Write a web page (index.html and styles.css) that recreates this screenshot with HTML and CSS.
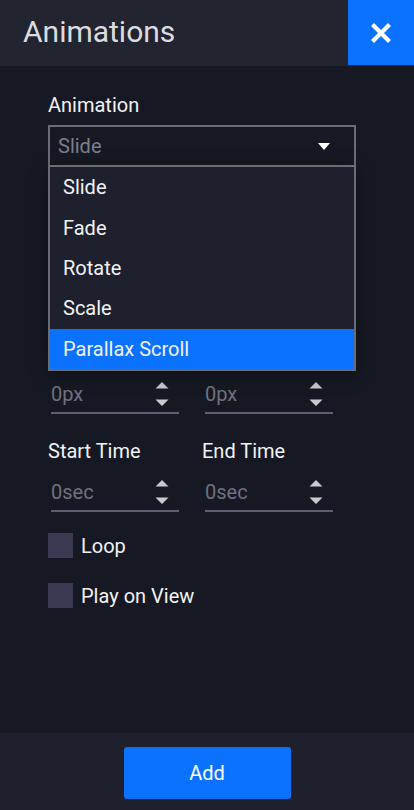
FILE: index.html
```html
<!DOCTYPE html>
<html lang="en">
<head>
<meta charset="utf-8">
<title>Animations</title>
<link rel="stylesheet" href="styles.css">
</head>
<body>
<div class="app">
  <header class="topbar">
    <h1 class="title">Animations</h1>
    <button class="close" aria-label="Close">
      <svg width="20" height="20" viewBox="0 0 20 20"><path d="M3 3 L17 17 M17 3 L3 17" stroke="#fff" stroke-width="4.2" stroke-linecap="square" fill="none"/></svg>
    </button>
  </header>

  <main class="content">
    <div class="field">
      <div class="label">Animation</div>
      <div class="select-wrap">
        <div class="select">
          <span class="placeholder">Slide</span>
          <svg class="caret" width="12" height="7" viewBox="0 0 12 7"><path d="M0 0 H12 L6 7 Z" fill="#fff"/></svg>
        </div>
        <ul class="menu">
          <li class="item">Slide</li>
          <li class="item">Fade</li>
          <li class="item">Rotate</li>
          <li class="item">Scale</li>
          <li class="item active">Parallax Scroll</li>
        </ul>
      </div>
    </div>

    <div class="field hidden-field">
      <div class="label">Direction</div>
      <div class="select"><span class="placeholder">Left</span></div>
    </div>

    <div class="check hidden-check">
      <span class="box"></span><span class="check-label">Reverse</span>
    </div>

    <div class="grid2 first-row">
      <div class="col">
        <div class="label under">Offset X</div>
        <div class="num"><span class="num-val">0px</span>
          <svg class="spin" width="14" height="26" viewBox="0 0 14 26"><path d="M7 1 L13.5 7.5 H0.5 Z M0.5 18.5 H13.5 L7 25 Z" fill="#c9cad0"/></svg>
        </div>
      </div>
      <div class="col">
        <div class="label under">Offset Y</div>
        <div class="num"><span class="num-val">0px</span>
          <svg class="spin" width="14" height="26" viewBox="0 0 14 26"><path d="M7 1 L13.5 7.5 H0.5 Z M0.5 18.5 H13.5 L7 25 Z" fill="#c9cad0"/></svg>
        </div>
      </div>
    </div>

    <div class="grid2">
      <div class="col">
        <div class="label">Start Time</div>
        <div class="num"><span class="num-val">0sec</span>
          <svg class="spin" width="14" height="26" viewBox="0 0 14 26"><path d="M7 1 L13.5 7.5 H0.5 Z M0.5 18.5 H13.5 L7 25 Z" fill="#c9cad0"/></svg>
        </div>
      </div>
      <div class="col">
        <div class="label">End Time</div>
        <div class="num"><span class="num-val">0sec</span>
          <svg class="spin" width="14" height="26" viewBox="0 0 14 26"><path d="M7 1 L13.5 7.5 H0.5 Z M0.5 18.5 H13.5 L7 25 Z" fill="#c9cad0"/></svg>
        </div>
      </div>
    </div>

    <div class="checks">
      <div class="check"><span class="box"></span><span class="check-label">Loop</span></div>
      <div class="check"><span class="box"></span><span class="check-label">Play on View</span></div>
    </div>
  </main>

  <footer class="footer">
    <button class="add">Add</button>
  </footer>
</div>
</body>
</html>
```

FILE: styles.css
```css
* { box-sizing: border-box; }
html, body { margin: 0; padding: 0; }
body {
  background: #161923;
  font-family: Roboto, "Liberation Sans", sans-serif;
  color: #f2f2f4;
}
.app {
  width: 414px;
  height: 810px;
  display: flex;
  flex-direction: column;
  background: #161923;
  overflow: hidden;
}
.topbar {
  height: 66px;
  flex: 0 0 66px;
  background: #22242f;
  display: flex;
  align-items: flex-start;
  justify-content: space-between;
}
.title {
  margin: 0;
  padding-left: 23px;
  line-height: 64px;
  font-size: 30px;
  font-weight: 400;
  color: #dcdce0;
}
.close {
  width: 66px;
  height: 65px;
  border: 0;
  padding: 0;
  background: #0a72ff;
  display: flex;
  align-items: center;
  justify-content: center;
  cursor: pointer;
}
.content {
  flex: 1;
  padding: 28px 58px 0 48px;
  display: flex;
  flex-direction: column;
}
.label {
  font-size: 20px;
  line-height: 22px;
  color: #f2f2f4;
}
.field .label { margin-bottom: 9px; }
.select-wrap { position: relative; z-index: 2; }
.select {
  height: 42px;
  border: 2px solid #6a6c78;
  background: #161923;
  display: flex;
  align-items: center;
  justify-content: space-between;
  padding: 0 24px 0 8px;
}
.placeholder {
  font-size: 20px;
  color: #7c7f8a;
}
.caret { display: block; margin-top: 1px; }
.menu {
  position: absolute;
  left: 0;
  right: 0;
  top: calc(100% - 2px);
  margin: 0;
  padding: 0;
  list-style: none;
  background: #1e202d;
  border: 2px solid #6a6c78;
  box-shadow: 0 4px 18px rgba(0, 0, 0, 0.35);
}
.item {
  height: 40.4px;
  display: flex;
  align-items: center;
  padding-left: 13px;
  font-size: 20px;
  color: #f2f2f4;
}
.item.active { background: #0a72ff; }

.hidden-field { margin-top: 20px; visibility: hidden; }
.hidden-check { margin-top: 22px; visibility: hidden; }
.under { visibility: hidden; }

.grid2 {
  display: grid;
  grid-template-columns: 154px 154px;
  margin-top: 26px;
}
.first-row { margin-top: 35px; }
.col .label { margin-bottom: 12px; }
.num {
  margin-left: 3px;
  width: 128px;
  height: 38px;
  border-bottom: 2px solid #5d6070;
  display: flex;
  align-items: center;
  justify-content: space-between;
  padding-right: 10px;
}
.num-val {
  font-size: 20px;
  color: #6f727e;
}
.spin { display: block; }

.checks {
  margin-top: 21px;
  display: flex;
  flex-direction: column;
  gap: 25px;
}
.check {
  display: flex;
  align-items: center;
  height: 25px;
}
.box {
  width: 25px;
  height: 25px;
  background: #3a3b53;
  margin-right: 8px;
}
.check-label {
  font-size: 20px;
  color: #f2f2f4;
}

.footer {
  flex: 0 0 77px;
  height: 77px;
  background: #1e202d;
  display: flex;
  justify-content: center;
  padding-top: 14px;
}
.add {
  width: 167px;
  height: 52px;
  border: 0;
  border-radius: 3px;
  background: #0a72ff;
  color: #ffffff;
  font-family: Roboto, "Liberation Sans", sans-serif;
  font-size: 20px;
  cursor: pointer;
}
```
